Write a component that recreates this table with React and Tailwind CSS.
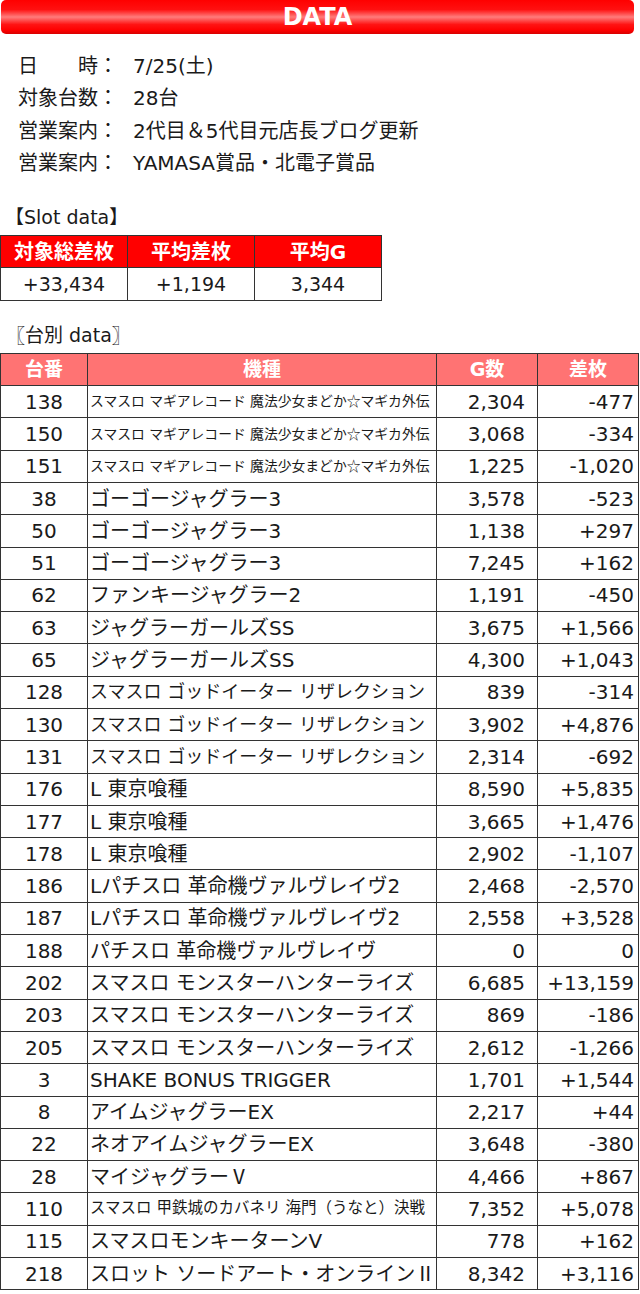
import React from "react";

const info = [
  ["日　　時：", "7/25(土)"],
  ["対象台数：", "28台"],
  ["営業案内：", "2代目＆5代目元店長ブログ更新"],
  ["営業案内：", "YAMASA賞品・北電子賞品"],
];

const madoka = "スマスロ マギアレコード 魔法少女まどか☆マギカ外伝";
const godeater = "スマスロ ゴッドイーター リザレクション";
const mhr = "スマスロ モンスターハンターライズ";

// size: s = small, k = kabaneri, m = medium, l = large
const rows = [
  ["138", madoka, "s", "2,304", "-477"],
  ["150", madoka, "s", "3,068", "-334"],
  ["151", madoka, "s", "1,225", "-1,020"],
  ["38", "ゴーゴージャグラー3", "l", "3,578", "-523"],
  ["50", "ゴーゴージャグラー3", "l", "1,138", "+297"],
  ["51", "ゴーゴージャグラー3", "l", "7,245", "+162"],
  ["62", "ファンキージャグラー2", "l", "1,191", "-450"],
  ["63", "ジャグラーガールズSS", "l", "3,675", "+1,566"],
  ["65", "ジャグラーガールズSS", "l", "4,300", "+1,043"],
  ["128", godeater, "m", "839", "-314"],
  ["130", godeater, "m", "3,902", "+4,876"],
  ["131", godeater, "m", "2,314", "-692"],
  ["176", "L 東京喰種", "l", "8,590", "+5,835"],
  ["177", "L 東京喰種", "l", "3,665", "+1,476"],
  ["178", "L 東京喰種", "l", "2,902", "-1,107"],
  ["186", "Lパチスロ 革命機ヴァルヴレイヴ2", "l", "2,468", "-2,570"],
  ["187", "Lパチスロ 革命機ヴァルヴレイヴ2", "l", "2,558", "+3,528"],
  ["188", "パチスロ 革命機ヴァルヴレイヴ", "l", "0", "0"],
  ["202", mhr, "l", "6,685", "+13,159"],
  ["203", mhr, "l", "869", "-186"],
  ["205", mhr, "l", "2,612", "-1,266"],
  ["3", "SHAKE BONUS TRIGGER", "l", "1,701", "+1,544"],
  ["8", "アイムジャグラーEX", "l", "2,217", "+44"],
  ["22", "ネオアイムジャグラーEX", "l", "3,648", "-380"],
  ["28", "マイジャグラーⅤ", "l", "4,466", "+867"],
  ["110", "スマスロ 甲鉄城のカバネリ 海門（うなと）決戦", "k", "7,352", "+5,078"],
  ["115", "スマスロモンキーターンV", "l", "778", "+162"],
  ["218", "スロット ソードアート・オンラインⅡ", "l", "8,342", "+3,116"],
];

const nameSize = {
  s: "text-[13.8px]",
  k: "text-[15.5px]",
  m: "text-[18px]",
  l: "text-[20px]",
};

// symbols that DejaVu would draw narrow; give them to the CJK font
const cjk = (text) =>
  text.split(/([☆ⅡⅤ])/).map((part, i) =>
    /^[☆ⅡⅤ]$/.test(part) ? (
      <span key={i} className="font-['Noto_Sans_CJK_JP',sans-serif]">{part}</span>
    ) : (
      part
    )
  );

export default function App() {
  return (
    <div className="w-[640px] min-h-[1294px] bg-white text-[#1a1a1a] font-['DejaVu_Sans','Noto_Sans_CJK_JP',sans-serif]">
      {/* title bar */}
      <div className="ml-[1px] w-[633px] h-[34px] rounded-[5px] bg-[linear-gradient(to_bottom,#f00_0%,#ff1010_28%,#ff7c7c_50%,#ff1414_72%,#f00_88%,#d80000_100%)] flex items-center justify-center">
        <span className="text-white font-bold text-[24px] leading-none">DATA</span>
      </div>

      <div className="mt-4 pl-[18px] text-[20px] leading-[32.4px]">
        {info.map(([k, v], i) => (
          <div key={i} className="flex">
            <span className="w-[115px] shrink-0">{k}</span>
            <span>{v}</span>
          </div>
        ))}
      </div>

      <div className="mt-[25px] pl-[5px] text-[19px] leading-[24px]">【Slot data】</div>

      <table className="mt-[6.5px] border-collapse w-[382px] table-fixed">
        <tbody>
          <tr className="h-[32px] bg-[#f00] text-white font-bold text-[20px]">
            <td className="border border-[#333] text-center">対象総差枚</td>
            <td className="border border-[#333] text-center">平均差枚</td>
            <td className="border border-[#333] text-center">平均G</td>
          </tr>
          <tr className="h-[33px] text-[19px]">
            <td className="border border-[#333] text-center">+33,434</td>
            <td className="border border-[#333] text-center">+1,194</td>
            <td className="border border-[#333] text-center">3,344</td>
          </tr>
        </tbody>
      </table>

      <div className="mt-[22px] pl-[6px] h-[24px] flex items-center text-[19px] leading-[24px]">
        <span className="font-['Noto_Sans_CJK_JP',sans-serif] font-bold">〖</span>
        <span>台別 data</span>
        <span className="font-['Noto_Sans_CJK_JP',sans-serif] font-bold">〗</span>
      </div>

      <table className="mt-[5.5px] border-collapse w-[638px] table-fixed">
        <colgroup>
          <col className="w-[87px]" />
          <col className="w-[349px]" />
          <col className="w-[101px]" />
          <col className="w-[101px]" />
        </colgroup>
        <thead>
          <tr className="h-[32.4px] bg-[#ff7373] text-white font-bold text-[19px]">
            <th className="border border-[#333] text-center font-bold">台番</th>
            <th className="border border-[#333] text-center font-bold">機種</th>
            <th className="border border-[#333] text-center font-bold">G数</th>
            <th className="border border-[#333] text-center font-bold">差枚</th>
          </tr>
        </thead>
        <tbody>
          {rows.map(([no, name, size, g, diff]) => (
            <tr key={no} className="h-[32.3px] text-[20px]">
              <td className="border border-[#333] text-center leading-none">{no}</td>
              <td className={`border border-[#333] pl-[2px] whitespace-nowrap overflow-hidden leading-none ${nameSize[size]}`}>
                {cjk(name)}
              </td>
              <td className="border border-[#333] text-right pr-3 leading-none">{g}</td>
              <td className="border border-[#333] text-right pr-[4px] leading-none">{diff}</td>
            </tr>
          ))}
        </tbody>
      </table>
    </div>
  );
}
